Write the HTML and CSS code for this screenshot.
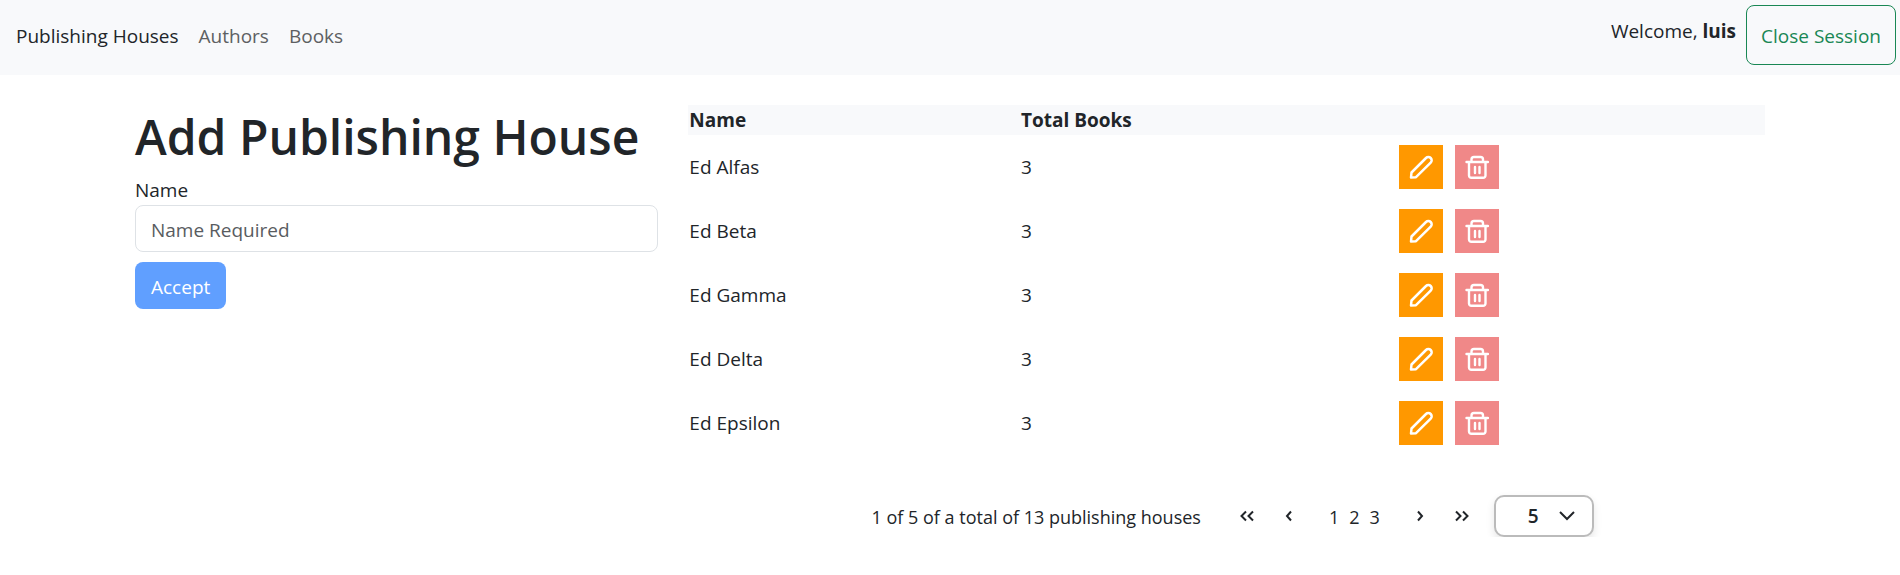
FILE: index.html
```
<!DOCTYPE html>
<html lang="en">
<head>
<meta charset="utf-8">
<title>Publishing Houses</title>
<link rel="stylesheet" href="styles.css">
</head>
<body>
<svg class="sprite" aria-hidden="true">
  <symbol id="pencil" viewBox="0 0 24 24"><path stroke-width="2.500" d="M2 22.500L2.500 17.500L17 3A3.300 3.300 0 0 1 21.700 7.700L7 22.200Z"/></symbol>
  <symbol id="trash" viewBox="0 0 24 24"><path stroke-width="2.400" d="M1.500 7H23M4 7V20.500a2.500 2.500 0 0 0 2.500 2.300H18a2.500 2.500 0 0 0 2.500-2.300V7M6.500 7V4.500a2.500 2.500 0 0 1 2.500-2.500H15.500A2.500 2.500 0 0 1 18 4.500V7M10 12V18M14.500 12V18"/></symbol>
  <symbol id="left" viewBox="0 0 8 12"><path d="M6 1.500L2 6l4 4.500"/></symbol>
  <symbol id="right" viewBox="0 0 8 12"><path d="M2 1.500L6 6l-4 4.500"/></symbol>
  <symbol id="first" viewBox="0 0 16 12"><path d="M7 1.500L2.500 6 7 10.500M14 1.500L9.500 6l4.500 4.500"/></symbol>
  <symbol id="last" viewBox="0 0 16 12"><path d="M2 1.500L6.500 6 2 10.500M9 1.500L13.500 6 9 10.500"/></symbol>
</svg>
<header class="navbar">
  <nav class="nav-links">
    <a class="nav-link active" href="#">Publishing Houses</a>
    <a class="nav-link" href="#">Authors</a>
    <a class="nav-link" href="#">Books</a>
  </nav>
  <div class="session">
    <span class="welcome">Welcome, <strong>luis</strong></span>
    <button class="close-session" type="button">Close Session</button>
  </div>
</header>
<main class="content">
  <form class="add-form">
    <h1 class="title">Add Publishing House</h1>
    <label class="label" for="name">Name</label>
    <input class="text-input" id="name" type="text" placeholder="Name Required">
    <button class="accept" type="submit" disabled>Accept</button>
  </form>
  <section class="listing">
    <table class="houses">
      <thead>
        <tr><th class="col-name">Name</th><th class="col-total">Total Books</th><th></th></tr>
      </thead>
      <tbody>
        <tr><td>Ed Alfas</td><td>3</td><td><div class="actions"><button class="icon-button edit" type="button" aria-label="Edit"><svg class="icon"><use href="#pencil"/></svg></button><button class="icon-button delete" type="button" aria-label="Delete"><svg class="icon"><use href="#trash"/></svg></button></div></td></tr>
        <tr><td>Ed Beta</td><td>3</td><td><div class="actions"><button class="icon-button edit" type="button" aria-label="Edit"><svg class="icon"><use href="#pencil"/></svg></button><button class="icon-button delete" type="button" aria-label="Delete"><svg class="icon"><use href="#trash"/></svg></button></div></td></tr>
        <tr><td>Ed Gamma</td><td>3</td><td><div class="actions"><button class="icon-button edit" type="button" aria-label="Edit"><svg class="icon"><use href="#pencil"/></svg></button><button class="icon-button delete" type="button" aria-label="Delete"><svg class="icon"><use href="#trash"/></svg></button></div></td></tr>
        <tr><td>Ed Delta</td><td>3</td><td><div class="actions"><button class="icon-button edit" type="button" aria-label="Edit"><svg class="icon"><use href="#pencil"/></svg></button><button class="icon-button delete" type="button" aria-label="Delete"><svg class="icon"><use href="#trash"/></svg></button></div></td></tr>
        <tr><td>Ed Epsilon</td><td>3</td><td><div class="actions"><button class="icon-button edit" type="button" aria-label="Edit"><svg class="icon"><use href="#pencil"/></svg></button><button class="icon-button delete" type="button" aria-label="Delete"><svg class="icon"><use href="#trash"/></svg></button></div></td></tr>
      </tbody>
    </table>
    <div class="pagination">
      <span class="summary">1 of 5 of a total of 13 publishing houses</span>
      <button class="page-arrow wide" type="button" aria-label="First page"><svg class="arrow-double"><use href="#first"/></svg></button>
      <button class="page-arrow" type="button" aria-label="Previous page"><svg class="arrow-single"><use href="#left"/></svg></button>
      <div class="pages"><button class="page" type="button">1</button><button class="page" type="button">2</button><button class="page" type="button">3</button></div>
      <button class="page-arrow" type="button" aria-label="Next page"><svg class="arrow-single"><use href="#right"/></svg></button>
      <button class="page-arrow wide" type="button" aria-label="Last page"><svg class="arrow-double"><use href="#last"/></svg></button>
      <div class="size-box">
        <select class="page-size" aria-label="Rows per page"><option>5</option></select>
        <svg class="chevron" viewBox="0 0 16 10"><path d="M1 1l7 7 7-7"/></svg>
      </div>
    </div>
  </section>
</main>
</body>
</html>
```
FILE: styles.css
```
* {
  box-sizing: border-box;
}

body {
  margin: 0;
  background: #fff;
  color: #212529;
  font-family: "Segoe UI", "Open Sans", sans-serif;
  font-size: 19px;
  line-height: 30px;
}

button,
input,
select {
  font: inherit;
  color: inherit;
}

button {
  border: 0;
  background: none;
  padding: 0;
}

svg {
  display: block;
  fill: none;
  stroke: currentColor;
  stroke-width: 2px;
}

.sprite {
  position: absolute;
  width: 0;
  height: 0;
}

.navbar {
  display: flex;
  justify-content: space-between;
  background: #f8f9fb;
  padding: 5px 4px 10px 16px;
}

.nav-links {
  display: flex;
  align-items: center;
  gap: 20px;
  padding-top: 2px;
}

.nav-link {
  color: #5d6062;
  text-decoration: none;
}

.nav-link.active {
  color: #212529;
}

.session {
  display: flex;
  gap: 10px;
}

.welcome {
  padding-top: 11px;
}

.close-session {
  height: 60px;
  padding: 2px 14px 0;
  border: 1px solid #198754;
  border-radius: 8px;
  color: #198754;
}

.content {
  display: grid;
  grid-template-columns: repeat(12, 1fr);
  column-gap: 30px;
  max-width: 1630px;
  margin: 30px auto 0;
}

.add-form {
  grid-column: span 4;
  display: flex;
  flex-direction: column;
  align-items: flex-start;
}

.title {
  margin: 0 0 8px;
  padding-top: 2px;
  font-size: 48px;
  font-weight: 600;
  line-height: 60px;
  white-space: nowrap;
}

.text-input {
  width: 100%;
  height: 47px;
  padding: 2px 15px 0;
  border: 1px solid #dee2e6;
  border-radius: 8px;
  background: #fff;
}

.text-input::placeholder {
  color: #595c5f;
  opacity: 1;
}

.accept {
  height: 47px;
  margin-top: 10px;
  padding: 2px 16px 0;
  border-radius: 8px;
  background: #609fff;
  color: #fff;
}

.listing {
  grid-column: span 8;
}

.houses {
  width: 100%;
  border-collapse: collapse;
  table-layout: fixed;
}

.houses th,
.houses td {
  padding: 0 1px;
  text-align: left;
}

.houses thead {
  background: #f8f9fb;
}

.houses td {
  height: 64px;
}

.col-name {
  width: 30.8%;
}

.col-total {
  width: 35.1%;
}

.actions {
  display: flex;
  gap: 12px;
}

.icon-button {
  display: grid;
  place-items: center;
  width: 44px;
  height: 44px;
  color: #fff;
}

.edit {
  background: #ff9800;
}

.delete {
  background: #f08888;
}

.icon {
  width: 24px;
  height: 24px;
  stroke-linejoin: round;
  stroke-linecap: round;
}

.pagination {
  display: flex;
  justify-content: center;
  align-items: center;
  margin: 40px 0 0 12px;
  font-size: 18px;
}

.summary {
  margin-right: 24px;
  padding-top: 2px;
}

.page-arrow {
  display: grid;
  place-items: center;
  width: 40px;
  height: 40px;
}

.page-arrow.wide {
  width: 44px;
}

.arrow-single {
  width: 8px;
  height: 12px;
}

.arrow-double {
  width: 16px;
  height: 12px;
}

.pages {
  display: flex;
  gap: 10px;
  padding: 2px 20px 0;
}

.size-box {
  position: relative;
  margin-left: 10px;
}

.page-size {
  display: block;
  appearance: none;
  width: 100px;
  height: 42px;
  padding: 0 32px;
  border: 2px solid #bbb;
  border-radius: 10px;
  background: #fff;
  box-shadow: 0 4px 8px rgba(0, 0, 0, 0.1);
  font-size: 19px;
  font-weight: 600;
}

.chevron {
  position: absolute;
  top: 16px;
  right: 19px;
  width: 16px;
  height: 10px;
  pointer-events: none;
}
```
